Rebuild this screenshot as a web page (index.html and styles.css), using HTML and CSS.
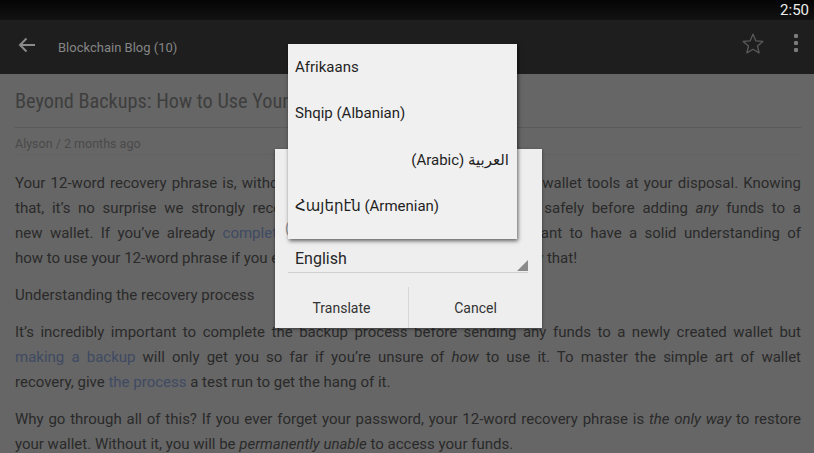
FILE: index.html
```html
<!DOCTYPE html>
<html>
<head>
<meta charset="utf-8">
<link rel="stylesheet" href="styles.css">
</head>
<body>
<div class="screen">
  <div class="status"><span class="clock">2:50</span></div>
  <div class="appbar">
    <svg class="back" width="18" height="16" viewBox="0 0 18 16"><path d="M17 8H2M8.5 1.5L2 8l6.5 6.5" fill="none" stroke="#8a8a8a" stroke-width="2"/></svg>
    <span class="apptitle">Blockchain Blog (10)</span>
    <span class="spacer"></span>
    <svg class="star" width="24" height="24" viewBox="0 0 24 24"><path d="M12 2.2l2.8 6.6 7 .6-5.3 4.6 1.6 6.9L12 17.3l-6.1 3.6 1.6-6.9L2.2 9.4l7-.6z" fill="none" stroke="#5a5a5a" stroke-width="1.3" stroke-linejoin="round"/></svg>
    <span class="dots"><i></i><i></i><i></i></span>
  </div>
  <div class="article">
    <h1 class="title">Beyond Backups: How to Use Your 12-Word Recovery Phrase</h1>
    <div class="meta">Alyson / 2 months ago</div>
    <div class="para">
      <div class="ln">Your 12-word recovery phrase is, without a doubt, one of the most important wallet tools at your disposal. Knowing</div>
      <div class="ln">that, it’s no surprise we strongly recommend backing it up and storing it safely before adding <em>any</em> funds to a</div>
      <div class="ln">new wallet. If you’ve already <a>completed a backup process</a>, it’s very important to have a solid understanding of</div>
      <div class="ln last">how to use your 12-word phrase if you ever need to. Here’s how you’d do exactly that!</div>
    </div>
    <div class="para">
      <div class="ln last">Understanding the recovery process</div>
    </div>
    <div class="para">
      <div class="ln">It’s incredibly important to complete the backup process before sending any funds to a newly created wallet but</div>
      <div class="ln"><a>making a backup</a> will only get you so far if you’re unsure of <em>how</em> to use it. To master the simple art of wallet</div>
      <div class="ln last">recovery, give <a>the process</a> a test run to get the hang of it.</div>
    </div>
    <div class="para wide">
      <div class="ln">Why go through all of this? If you ever forget your password, your 12-word recovery phrase is <em>the only way</em> to restore</div>
      <div class="ln last">your wallet. Without it, you will be <em>permanently unable</em> to access your funds.</div>
    </div>
  </div>

  <div class="dialog">
    <div class="dlg-label">(Auto-detect)</div>
    <div class="spinner">
      <span>English</span>
      <span class="tri"></span>
    </div>
    <div class="buttons">
      <div class="btn">Translate</div>
      <div class="btn sep">Cancel</div>
    </div>
  </div>

  <div class="popup">
    <div class="item">Afrikaans</div>
    <div class="item">Shqip (Albanian)</div>
    <div class="item rtl">(Arabic) العربية</div>
    <div class="item">Հայերէն (Armenian)</div>
  </div>
</div>
</body>
</html>
```
FILE: styles.css
```css
html, body {
  margin: 0;
  padding: 0;
}
body {
  background: #666;
  font-family: Roboto, "Noto Sans", "DejaVu Sans", sans-serif;
}
.screen {
  position: relative;
  width: 814px;
  height: 453px;
  overflow: hidden;
  background: #666;
}
.status {
  height: 20px;
  background: linear-gradient(#050505, #121212);
  display: flex;
  justify-content: flex-end;
  align-items: center;
  padding-right: 5px;
}
.clock {
  color: #ececec;
  font-size: 15px;
  line-height: 20px;
}
.appbar {
  height: 54px;
  background: #1e1e1e;
  display: flex;
  align-items: center;
  padding-left: 18px;
  padding-right: 16px;
}
.back {
  margin-top: -4px;
}
.apptitle {
  margin-left: 22px;
  margin-top: 1px;
  color: #858585;
  font-size: 13px;
}
.spacer { flex: 1; }
.star {
  margin-top: -6px;
  margin-right: 29px;
}
.dots {
  display: flex;
  flex-direction: column;
  gap: 3px;
  margin-top: -8px;
}
.dots i {
  display: block;
  width: 4px;
  height: 4px;
  border-radius: 1px;
  background: #7a7a7a;
}
.article {
  padding: 0 13px 0 15px;
  color: #2a2a2a;
}
.title {
  margin: 0;
  padding: 14px 0 13px;
  height: 26px;
  line-height: 26px;
  font-family: "Roboto Condensed", "Liberation Sans Narrow", "DejaVu Sans Condensed", Roboto, sans-serif;
  font-stretch: condensed;
  font-weight: normal;
  font-size: 20.3px;
  color: #3e3e3e;
  white-space: nowrap;
  overflow: hidden;
  border-bottom: 1px solid #5a5a5a;
}
.meta {
  font-size: 12.5px;
  color: #4a4a4a;
  line-height: 14px;
  padding: 9px 0 3px;
  border-bottom: 1px solid #626262;
  margin-bottom: 16px;
}
.para {
  font-size: 15px;
  line-height: 25px;
  margin-bottom: 12px;
}
.para.wide {
  margin-top: 3px;
}
.ln {
  text-align: justify;
  text-align-last: justify;
  white-space: nowrap;
}
.ln.last {
  text-align-last: left;
}
.ln a {
  color: #3f4a63;
}
.ln em {
  font-style: italic;
}
.dialog {
  position: absolute;
  left: 275px;
  top: 149px;
  width: 267px;
  height: 179px;
  background: #eeeeee;
  box-shadow: 0 1px 3px rgba(0,0,0,0.45);
  display: flex;
  flex-direction: column;
}
.dlg-label {
  padding: 70px 0 0 10px;
  height: 25px;
  font-size: 14px;
  color: #8d8d8d;
  line-height: 18px;
}
.spinner {
  margin: 0 14px 0 13px;
  height: 28px;
  border-bottom: 1px solid #cfcfcf;
  display: flex;
  align-items: center;
  padding-left: 7px;
  position: relative;
  font-size: 16px;
  color: #262626;
}
.tri {
  position: absolute;
  right: 0;
  bottom: 1px;
  width: 0;
  height: 0;
  border-style: solid;
  border-width: 0 0 11px 11px;
  border-color: transparent transparent #8a8a8a transparent;
}
.buttons {
  margin-top: 14px;
  flex: 1;
  display: flex;
}
.btn {
  flex: 1;
  display: flex;
  align-items: center;
  justify-content: center;
  font-size: 14px;
  color: #333;
  padding-top: 1px;
}
.btn.sep {
  border-left: 1.5px solid #d6d6d6;
}
.popup {
  position: absolute;
  left: 288px;
  top: 44px;
  width: 229px;
  height: 195px;
  background: #f0f0f0;
  box-shadow: 1px 2px 4px rgba(0,0,0,0.6);
}
.item {
  height: 46.3px;
  line-height: 46.3px;
  padding: 0 8px 0 7px;
  font-size: 15px;
  color: #1f1f1f;
}
.item.rtl {
  text-align: right;
}
```
